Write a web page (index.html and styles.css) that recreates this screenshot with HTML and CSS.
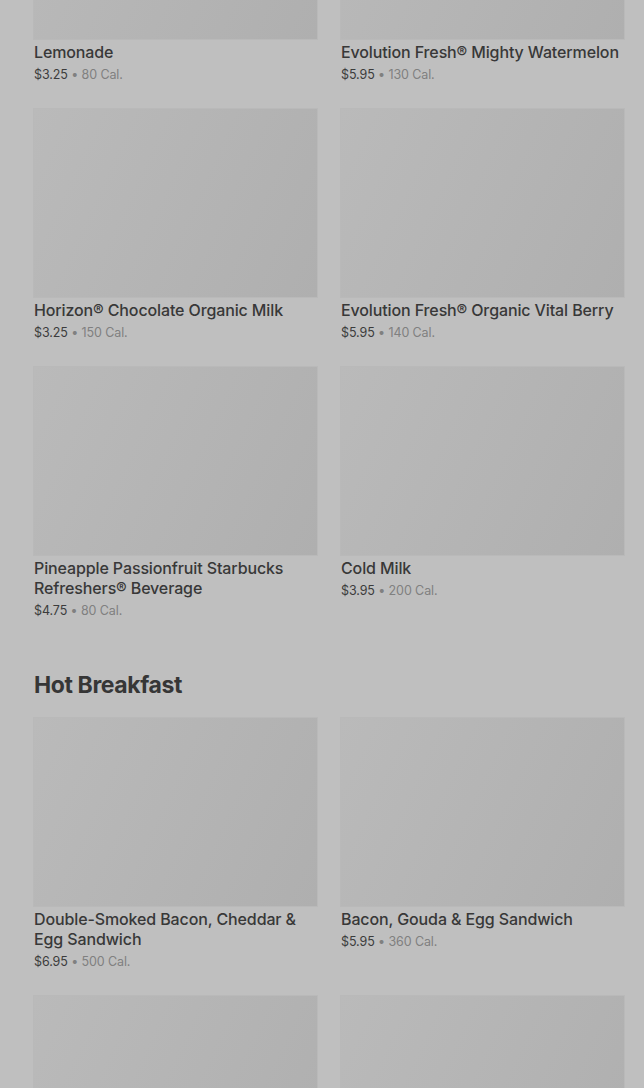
FILE: index.html
```html
<!DOCTYPE html>
<html lang="en">
<head>
    <meta charset="UTF-8">
    <meta name="viewport" content="width=device-width, initial-scale=1.0">
    <title>Menu</title>
    <link rel="stylesheet" href="styles.css">
</head>
<body>
    <main class="menu">
        <section class="section">
            <div class="grid">
                <div class="item">
                    <div class="thumb"></div>
                    <div class="name">Lemonade</div>
                    <div class="meta"><span class="price">$3.25</span> • 80 Cal.</div>
                </div>
                <div class="item">
                    <div class="thumb"></div>
                    <div class="name">Evolution Fresh® Mighty Watermelon</div>
                    <div class="meta"><span class="price">$5.95</span> • 130 Cal.</div>
                </div>
                <div class="item">
                    <div class="thumb"></div>
                    <div class="name">Horizon® Chocolate Organic Milk</div>
                    <div class="meta"><span class="price">$3.25</span> • 150 Cal.</div>
                </div>
                <div class="item">
                    <div class="thumb"></div>
                    <div class="name">Evolution Fresh® Organic Vital Berry</div>
                    <div class="meta"><span class="price">$5.95</span> • 140 Cal.</div>
                </div>
                <div class="item">
                    <div class="thumb"></div>
                    <div class="name">Pineapple Passionfruit Starbucks Refreshers® Beverage</div>
                    <div class="meta"><span class="price">$4.75</span> • 80 Cal.</div>
                </div>
                <div class="item">
                    <div class="thumb"></div>
                    <div class="name">Cold Milk</div>
                    <div class="meta"><span class="price">$3.95</span> • 200 Cal.</div>
                </div>
            </div>
        </section>

        <section class="section">
            <h2 class="section-title">Hot Breakfast</h2>
            <div class="grid">
                <div class="item">
                    <div class="thumb"></div>
                    <div class="name">Double-Smoked Bacon, Cheddar &amp; Egg Sandwich</div>
                    <div class="meta"><span class="price">$6.95</span> • 500 Cal.</div>
                </div>
                <div class="item">
                    <div class="thumb"></div>
                    <div class="name">Bacon, Gouda &amp; Egg Sandwich</div>
                    <div class="meta"><span class="price">$5.95</span> • 360 Cal.</div>
                </div>
                <div class="item">
                    <div class="thumb"></div>
                </div>
                <div class="item">
                    <div class="thumb"></div>
                </div>
            </div>
        </section>
    </main>
</body>
</html>
```

FILE: styles.css
```css
* {
    margin: 0;
    padding: 0;
    box-sizing: border-box;
}

html,
body {
    background: #bfbfbf;
    overflow: hidden;
}

body {
    font-family: Inter, "Noto Sans", sans-serif;
    color: #333333;
    height: 1088px;
}

/* list is scrolled part way, first row is cut at the top */
.menu {
    margin-top: -149px;
    padding: 0 20px 0 34px;
}

.grid {
    display: grid;
    grid-template-columns: 283px 283px;
    column-gap: 24px;
    row-gap: 24px;
}

.thumb {
    height: 188px;
    background: linear-gradient(115deg, #bababa 0%, #b5b5b5 45%, #afafaf 100%);
    box-shadow: 0 0 0 1px rgba(182, 182, 182, 0.7);
}

.name {
    margin-top: 3px;
    font-size: 16px;
    line-height: 20px;
    font-weight: 500;
    letter-spacing: -0.12px;
    color: #383838;
}

.meta {
    margin-top: 3px;
    font-size: 12.5px;
    line-height: 20px;
    letter-spacing: -0.1px;
    color: #808080;
}

.price {
    color: #3c3c3c;
}

.section-title {
    margin-top: 48px;
    margin-bottom: 17px;
    font-size: 23px;
    line-height: 32px;
    font-weight: 700;
    color: #363636;
    letter-spacing: -0.4px;
}
```
